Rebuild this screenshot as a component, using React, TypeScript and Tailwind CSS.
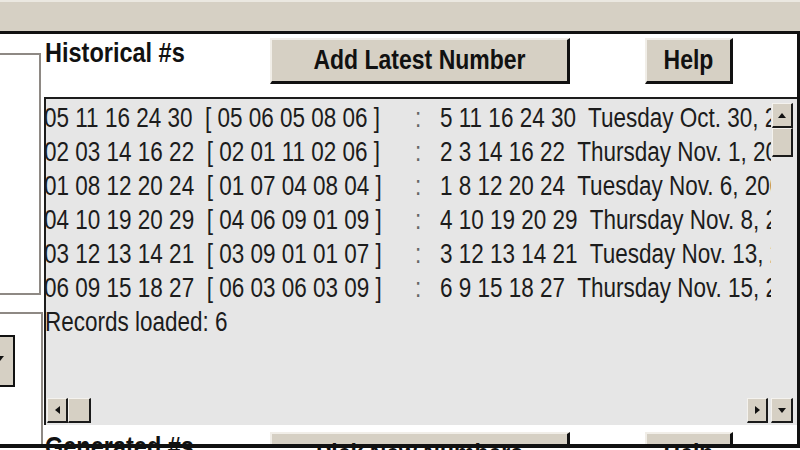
import clsx from 'clsx';

const FONT = "font-['Liberation_Sans',Arial,sans-serif]";

const ROWS = [
  ['05 11 16 24 30  [ 05 06 05 08 06 ]', '5 11 16 24 30  Tuesday Oct. 30, 2007'],
  ['02 03 14 16 22  [ 02 01 11 02 06 ]', '2 3 14 16 22  Thursday Nov. 1, 2007'],
  ['01 08 12 20 24  [ 01 07 04 08 04 ]', '1 8 12 20 24  Tuesday Nov. 6, 2007'],
  ['04 10 19 20 29  [ 04 06 09 01 09 ]', '4 10 19 20 29  Thursday Nov. 8, 2007'],
  ['03 12 13 14 21  [ 03 09 01 01 07 ]', '3 12 13 14 21  Tuesday Nov. 13, 2007'],
  ['06 09 15 18 27  [ 06 03 06 03 09 ]', '6 9 15 18 27  Thursday Nov. 15, 2007'],
];

function WinButton({ label, className }: { label: string; className: string }) {
  return (
    <div
      className={clsx(
        'flex h-[46px] shrink-0 items-center justify-center bg-[#d6d0c4] pb-[3px]',
        'border-t-2 border-l-2 border-r-[3px] border-b-[3px] border-t-[#f1eee8] border-l-[#f1eee8] border-r-[#111] border-b-[#111]',
        className,
      )}
    >
      <span className="inline-block scale-y-[1.2] text-[23px] font-bold leading-none text-[#111]">{label}</span>
    </div>
  );
}

function ScrollBtn({ children, className }: { children?: React.ReactNode; className: string }) {
  return (
    <div
      className={clsx(
        'flex shrink-0 items-center justify-center bg-[#d6d0c4]',
        'border-t border-l border-r-2 border-b-2 border-t-[#f4f2ee] border-l-[#f4f2ee] border-r-[#1a1a1a] border-b-[#1a1a1a]',
        className,
      )}
    >
      {children}
    </div>
  );
}

function Arrow({ dir }: { dir: 'up' | 'down' | 'left' | 'right' }) {
  const pts = {
    up: '0,5 8,5 4,0',
    down: '0,0 8,0 4,5',
    left: '5,0 5,8 0,4',
    right: '0,0 0,8 5,4',
  }[dir];
  const vertical = dir === 'up' || dir === 'down';
  return (
    <svg width={vertical ? 8 : 5} height={vertical ? 5 : 8} viewBox={vertical ? '0 0 8 5' : '0 0 5 8'}>
      <polygon points={pts} fill="#111" />
    </svg>
  );
}

function Header({ title, action, className }: { title: string; action: string; className: string }) {
  return (
    <div className={clsx('flex shrink-0 items-start', className)}>
      <div className="w-[226px] shrink-0 pl-[1px] pt-[1px]">
        <span className="inline-block scale-y-[1.2] text-[23.5px] font-bold leading-[34px] text-[#111]">{title}</span>
      </div>
      <WinButton label={action} className="mt-[4px] w-[300px]" />
      <WinButton label="Help" className="mt-[4px] ml-[75px] w-[88px]" />
    </div>
  );
}

export default function App() {
  return (
    <div className={clsx('flex h-[450px] w-[800px] flex-col overflow-hidden bg-white', FONT)}>
      <div className="h-[31px] shrink-0 border-t-2 border-[#ebe8e1] bg-[#d6d0c4]" />
      <div className="h-[3px] shrink-0 bg-[#111]" />

      <div className="flex h-[410px] shrink-0 border-r-[3px] border-[#111]">
        {/* left group boxes */}
        <div className="flex w-[44px] shrink-0 flex-col">
          <div className="mt-[19px] h-[242px] w-[41px] shrink-0 border-t-2 border-r-2 border-b-2 border-[#8e8984]" />
          <div className="mt-[17px] w-[43px] flex-1 border-t-2 border-r-2 border-[#8e8984]">
            <div className="mt-[21px] flex h-[52px] w-[15px] items-center border-2 border-l-0 border-[#111] bg-[#d6d0c4]">
              <div className="-ml-[4px] mt-[-6px]">
                <Arrow dir="down" />
              </div>
            </div>
          </div>
        </div>

        {/* main column */}
        <div className="flex min-w-0 flex-1 flex-col">
          <Header title="Historical #s" action="Add Latest Number" className="h-[63px]" />

          <div className="flex h-[328px] shrink-0 flex-col border-t-2 border-l-2 border-[#1c1c1c] bg-[#e6e6e6]">
            <div className="flex min-h-0 flex-1">
              <div className="min-w-0 flex-1 overflow-hidden pt-[2px] text-[22.5px] text-[#1c1c1c]">
                {ROWS.map(([left, right], i) => (
                  <div key={i} className="-ml-[2px] flex h-[34px] items-center whitespace-pre leading-[34px]">
                    <span className="inline-block w-[371px] shrink-0 scale-y-[1.25]">{left}</span>
                    <span className="inline-block w-[25px] shrink-0 scale-y-[1.25] text-[#666]">:</span>
                    <span className="inline-block shrink-0 scale-y-[1.25]">{right}</span>
                  </div>
                ))}
                <div className="-ml-[1px] flex h-[34px] items-center leading-[34px]">
                  <span className="inline-block scale-y-[1.25]">Records loaded: 6</span>
                </div>
              </div>
              <div className="flex w-[26px] shrink-0 flex-col pt-[4px] pl-[1px]">
                <ScrollBtn className="h-[25px] w-[21px]">
                  <Arrow dir="up" />
                </ScrollBtn>
                <ScrollBtn className="h-[29px] w-[21px]" />
              </div>
            </div>
            <div className="flex h-[27px] shrink-0 items-start pb-[2px]">
              <ScrollBtn className="ml-[1px] h-[25px] w-[21px]">
                <Arrow dir="left" />
              </ScrollBtn>
              <ScrollBtn className="h-[25px] w-[23px]" />
              <div className="flex-1" />
              <ScrollBtn className="h-[25px] w-[21px]">
                <Arrow dir="right" />
              </ScrollBtn>
              <ScrollBtn className="ml-[3px] mr-[4px] h-[25px] w-[22px]">
                <Arrow dir="down" />
              </ScrollBtn>
            </div>
          </div>

          <Header title="Generated #s" action="Pick New Numbers" className="pt-[3px]" />
        </div>
      </div>

      <div className="h-[4px] shrink-0 bg-[#111]" />
      <div className="flex-1 bg-white" />
    </div>
  );
}
